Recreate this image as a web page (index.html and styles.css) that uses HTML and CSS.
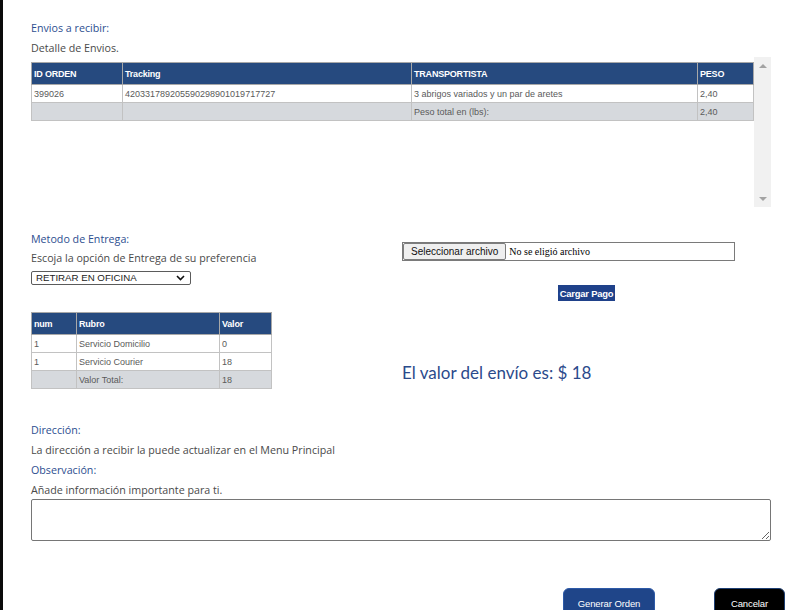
FILE: index.html
```html
<!DOCTYPE html>
<html lang="es">
<head>
<meta charset="utf-8">
<link rel="stylesheet" href="styles.css">
</head>
<body>
<div class="page">
  <section class="envios">
    <div class="label first">Envios a recibir:</div>
    <div class="text">Detalle de Envios.</div>
    <div class="scroll-box">
      <div class="scroll-content">
        <table class="grid big">
          <colgroup><col style="width:91px"><col style="width:289px"><col style="width:286px"><col style="width:56px"></colgroup>
          <thead>
            <tr><th>ID ORDEN</th><th>Tracking</th><th>TRANSPORTISTA</th><th>PESO</th></tr>
          </thead>
          <tbody>
            <tr><td>399026</td><td>420331789205590298901019717727</td><td>3 abrigos variados y un par de aretes</td><td>2,40</td></tr>
            <tr class="total"><td></td><td></td><td>Peso total en (lbs):</td><td>2,40</td></tr>
          </tbody>
        </table>
      </div>
      <div class="scrollbar">
        <span class="arrow up"></span>
        <span class="arrow down"></span>
      </div>
    </div>
  </section>

  <section class="entrega">
    <div class="col-left">
      <div class="label">Metodo de Entrega:</div>
      <div class="text choose">Escoja la opción de Entrega de su preferencia</div>
      <div class="select-wrap">
        <select class="select">
          <option>RETIRAR EN OFICINA</option>
        </select>
        <svg class="chev" width="9" height="6" viewBox="0 0 9 6"><path d="M1 1 L4.5 4.5 L8 1" fill="none" stroke="#111" stroke-width="1.6"/></svg>
      </div>
      <table class="grid small">
        <colgroup><col style="width:45px"><col style="width:143px"><col style="width:52px"></colgroup>
        <thead>
          <tr><th>num</th><th>Rubro</th><th>Valor</th></tr>
        </thead>
        <tbody>
          <tr><td>1</td><td>Servicio Domicilio</td><td>0</td></tr>
          <tr><td>1</td><td>Servicio Courier</td><td>18</td></tr>
          <tr class="total"><td></td><td>Valor Total:</td><td>18</td></tr>
        </tbody>
      </table>
    </div>
    <div class="col-right">
      <div class="file">
        <span class="file-btn">Seleccionar archivo</span>
        <span class="file-name">No se eligió archivo</span>
      </div>
      <div class="pay-row"><button class="pay">Cargar Pago</button></div>
      <div class="valor">El valor del envío es: $ 18</div>
    </div>
  </section>

  <section class="direccion">
    <div class="label">Dirección:</div>
    <div class="text">La dirección a recibir la puede actualizar en el Menu Principal</div>
    <div class="label">Observación:</div>
    <div class="text">Añade información importante para ti.</div>
    <textarea class="obs"></textarea>
  </section>

  <div class="actions">
    <button class="btn primary">Generar Orden</button>
    <button class="btn dark">Cancelar</button>
  </div>
</div>
</body>
</html>
```

FILE: styles.css
```css
html, body {
  margin: 0;
  padding: 0;
  background: #ffffff;
  height: 100%;
  overflow: hidden;
}
body {
  border-left: 3px solid #0b0b0b;
  box-sizing: border-box;
  font-family: "Open Sans", "Lato", sans-serif;
}
.page {
  padding: 0 22px 0 28px;
}
.label {
  color: #2d4e90;
  font-size: 10.7px;
  line-height: 14px;
  margin-top: 6px;
}
.label.first {
  margin-top: 21px;
}
.text {
  color: #4a4a4a;
  font-size: 10.7px;
  line-height: 14px;
  margin-top: 6px;
}
.scroll-box {
  display: flex;
  height: 150px;
  width: 740px;
  margin-top: 2px;
}
.scroll-content {
  flex: 1;
  padding-top: 5px;
}
.scrollbar {
  width: 17px;
  background: #f1f1f1;
  display: flex;
  flex-direction: column;
  justify-content: space-between;
  align-items: center;
  padding: 7px 0 6px;
  box-sizing: border-box;
}
.arrow {
  width: 0;
  height: 0;
  border-left: 4px solid transparent;
  border-right: 4px solid transparent;
}
.arrow.up { border-bottom: 4px solid #a3a3a3; }
.arrow.down { border-top: 4px solid #a3a3a3; }

.grid {
  border-collapse: collapse;
  table-layout: fixed;
  font-family: "Liberation Sans", Arial, sans-serif;
  font-size: 9px;
}
.grid.big { width: 722px; }
.grid.small { width: 240px; margin-top: 27px; }
.grid th {
  background: #264a7f;
  color: #ffffff;
  font-weight: bold;
  text-align: left;
  height: 21px;
  padding: 0 2px;
  border: 1px solid #a8a8a8;
  letter-spacing: -0.2px;
}
.grid td {
  color: #5a5a5a;
  height: 17px;
  padding: 0 2px;
  border: 1px solid #c2c2c2;
  white-space: nowrap;
}
.grid tr.total td {
  background: #d6d9dd;
}

.entrega {
  display: flex;
  margin-top: 25px;
}
.col-left {
  width: 371px;
}
.col-left > .label:first-child {
  margin-top: 0;
}
.col-right {
  width: 369px;
  padding-top: 10px;
}
.choose {
  margin-top: 5px;
}
.select-wrap {
  position: relative;
  width: 160px;
  margin-top: 6px;
}
.select {
  appearance: none;
  -webkit-appearance: none;
  display: block;
  width: 160px;
  height: 14px;
  border: 1px solid #5b5b5b;
  border-radius: 2px;
  background: #ffffff;
  font-family: "Liberation Sans", Arial, sans-serif;
  font-size: 9.7px;
  color: #222;
  padding: 0 0 0 4px;
  line-height: 12px;
  margin: 0;
}
.chev {
  position: absolute;
  right: 6px;
  top: 4px;
  pointer-events: none;
}
.file {
  display: flex;
  width: 333px;
  height: 19px;
  border: 1px solid #7a7a7a;
  box-sizing: border-box;
  align-items: stretch;
}
.file-btn {
  background: #efefef;
  border: 1px solid #7d7d7d;
  border-radius: 2px;
  font-family: "Liberation Sans", Arial, sans-serif;
  font-size: 10px;
  color: #111;
  line-height: 15px;
  padding: 0 7px 0 7px;
  margin: 0;
}
.file-name {
  font-family: "Liberation Serif", "Times New Roman", serif;
  font-size: 10px;
  line-height: 17px;
  color: #000;
  padding-left: 3px;
}
.pay-row {
  display: flex;
  justify-content: center;
  margin-top: 24px;
}
.pay {
  background: #1f418a;
  color: #fff;
  border: none;
  font-family: "Liberation Sans", Arial, sans-serif;
  font-weight: bold;
  font-size: 9.4px;
  height: 16px;
  padding: 0 2px;
  margin: 0;
  letter-spacing: -0.2px;
}
.valor {
  color: #2b4a8b;
  font-family: "Lato", "Open Sans", sans-serif;
  font-size: 17px;
  line-height: 20px;
  margin-top: 62px;
}
.direccion {
  margin-top: 34px;
}
.direccion .label:first-child {
  margin-top: 0;
}
.obs {
  display: block;
  width: 740px;
  height: 42px;
  margin-top: 2px;
  border: 1px solid #767676;
  border-radius: 2px;
  box-sizing: border-box;
  resize: both;
}
.actions {
  display: flex;
  justify-content: flex-end;
  gap: 59px;
  margin-top: 47px;
  margin-right: -14px;
}
.btn {
  font-family: "Liberation Sans", Arial, sans-serif;
  font-size: 9.5px;
  color: #fff;
  height: 34px;
  padding: 0 0 4px;
  border-radius: 6px;
  margin: 0;
  letter-spacing: -0.1px;
}
.btn.primary {
  width: 92px;
  background: #1f4589;
  border: 1px solid #2d5aa8;
}
.btn.dark {
  width: 71px;
  background: #000;
  border: 1px solid #1e3f73;
}
```
